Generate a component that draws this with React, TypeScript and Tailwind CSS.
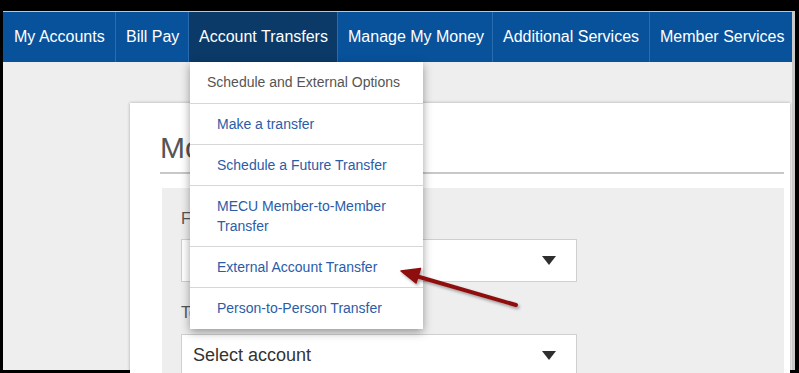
import React from 'react';

const NAV = [
  { label: 'My Accounts', w: 'w-[112px]' },
  { label: 'Bill Pay', w: 'w-[73px]' },
  { label: 'Account Transfers', w: 'w-[149px]', active: true },
  { label: 'Manage My Money', w: 'w-[155px]' },
  { label: 'Additional Services', w: 'w-[157px]' },
  { label: 'Member Services', w: 'flex-1' },
];

const MENU_ITEMS = [
  'Make a transfer',
  'Schedule a Future Transfer',
  'MECU Member-to-Member Transfer',
  'External Account Transfer',
  'Person-to-Person Transfer',
];

function TransferMenu() {
  return (
    <div className="absolute left-[1px] top-[50px] z-20 w-[233px] whitespace-normal bg-white shadow-[0_3px_9px_rgba(0,0,0,0.38)]">
      <div className="pl-[17px] pr-3 pt-[11px] pb-[11px] text-[14px] leading-[19px] text-[#555]">
        Schedule and External Options
      </div>
      {MENU_ITEMS.map((item) => (
        <div
          key={item}
          className="border-t border-[#d6d6d6] pl-[27px] pr-[27px] py-[10px] text-[14px] leading-[20px] text-[#2b5ca8] last:pb-[11px]"
        >
          {item}
        </div>
      ))}
    </div>
  );
}

function Caret() {
  return (
    <svg width="14" height="9" viewBox="0 0 14 9" className="shrink-0">
      <path d="M0 0 H14 L7 9 Z" fill="#2e2e2e" />
    </svg>
  );
}

function SelectBox({ value }: { value?: string }) {
  return (
    <div className="flex h-[43px] w-[396px] items-center justify-between border border-[#cfcfcf] bg-white pl-[11px] pr-[20px]">
      <span className="text-[18px] leading-[21px] text-[#333]">{value ?? ''}</span>
      <Caret />
    </div>
  );
}

function Arrow() {
  return (
    <svg className="pointer-events-none absolute left-0 top-0 z-30" width="799" height="373">
      <defs>
        <filter id="sh" x="-20%" y="-50%" width="140%" height="200%">
          <feDropShadow dx="1.5" dy="2" stdDeviation="1.5" floodColor="#000" floodOpacity="0.35" />
        </filter>
      </defs>
      <g filter="url(#sh)" fill="#8e1111" stroke="#8e1111">
        <line x1="416" y1="276" x2="516" y2="305" strokeWidth="4" strokeLinecap="round" />
        <path d="M401 271 L416 283 L420.5 268.5 Z" strokeWidth="1.5" strokeLinejoin="round" />
      </g>
    </svg>
  );
}

export default function App() {
  return (
    <div className="relative h-[373px] w-[799px] overflow-hidden bg-black pl-[3px] pr-[4px] pt-[11px] pb-[3px] font-['Liberation_Sans',Arial,sans-serif]">
      <div className="relative h-full border-r-[3px] border-[#c9c9c9] bg-[#eeeeee]">
        <nav className="flex h-[51px] border-t border-[#b9c7d6] bg-[#08529b] text-[16px] text-white">
          {NAV.map((n, i) => (
            <div
              key={n.label}
              className={`relative flex h-full items-center whitespace-nowrap pl-[10px] ${n.w} ${
                i > 0 ? 'border-l border-[#2a6cb0]' : 'pl-[11px]'
              } ${n.active ? 'bg-[#0b3a69]' : ''}`}
            >
              {n.label}
              {n.active && <TransferMenu />}
            </div>
          ))}
        </nav>

        <div className="pl-[127px] pr-[2px] pt-[41px]">
          <div className="h-[400px] bg-white pl-[32px] pr-[6px] pt-[28px] shadow-[0_0_3px_rgba(0,0,0,0.3)]">
            <h1 className="-ml-[2px] border-b-[2px] border-[#c8c8c8] pb-[7px] text-[30px] leading-[34px] text-[#555]">
              Move Money
            </h1>
            <div className="mt-[14px] h-[300px] bg-[#eeeeee] pl-[19px] pt-[22px]">
              <div className="text-[16px] leading-[18px] text-[#555]">From</div>
              <div className="mt-[11px]">
                <SelectBox />
              </div>
              <div className="mt-[22px] text-[16px] leading-[18px] text-[#555]">To</div>
              <div className="mt-[12px]">
                <SelectBox value="Select account" />
              </div>
            </div>
          </div>
        </div>
      </div>
      <Arrow />
    </div>
  );
}
